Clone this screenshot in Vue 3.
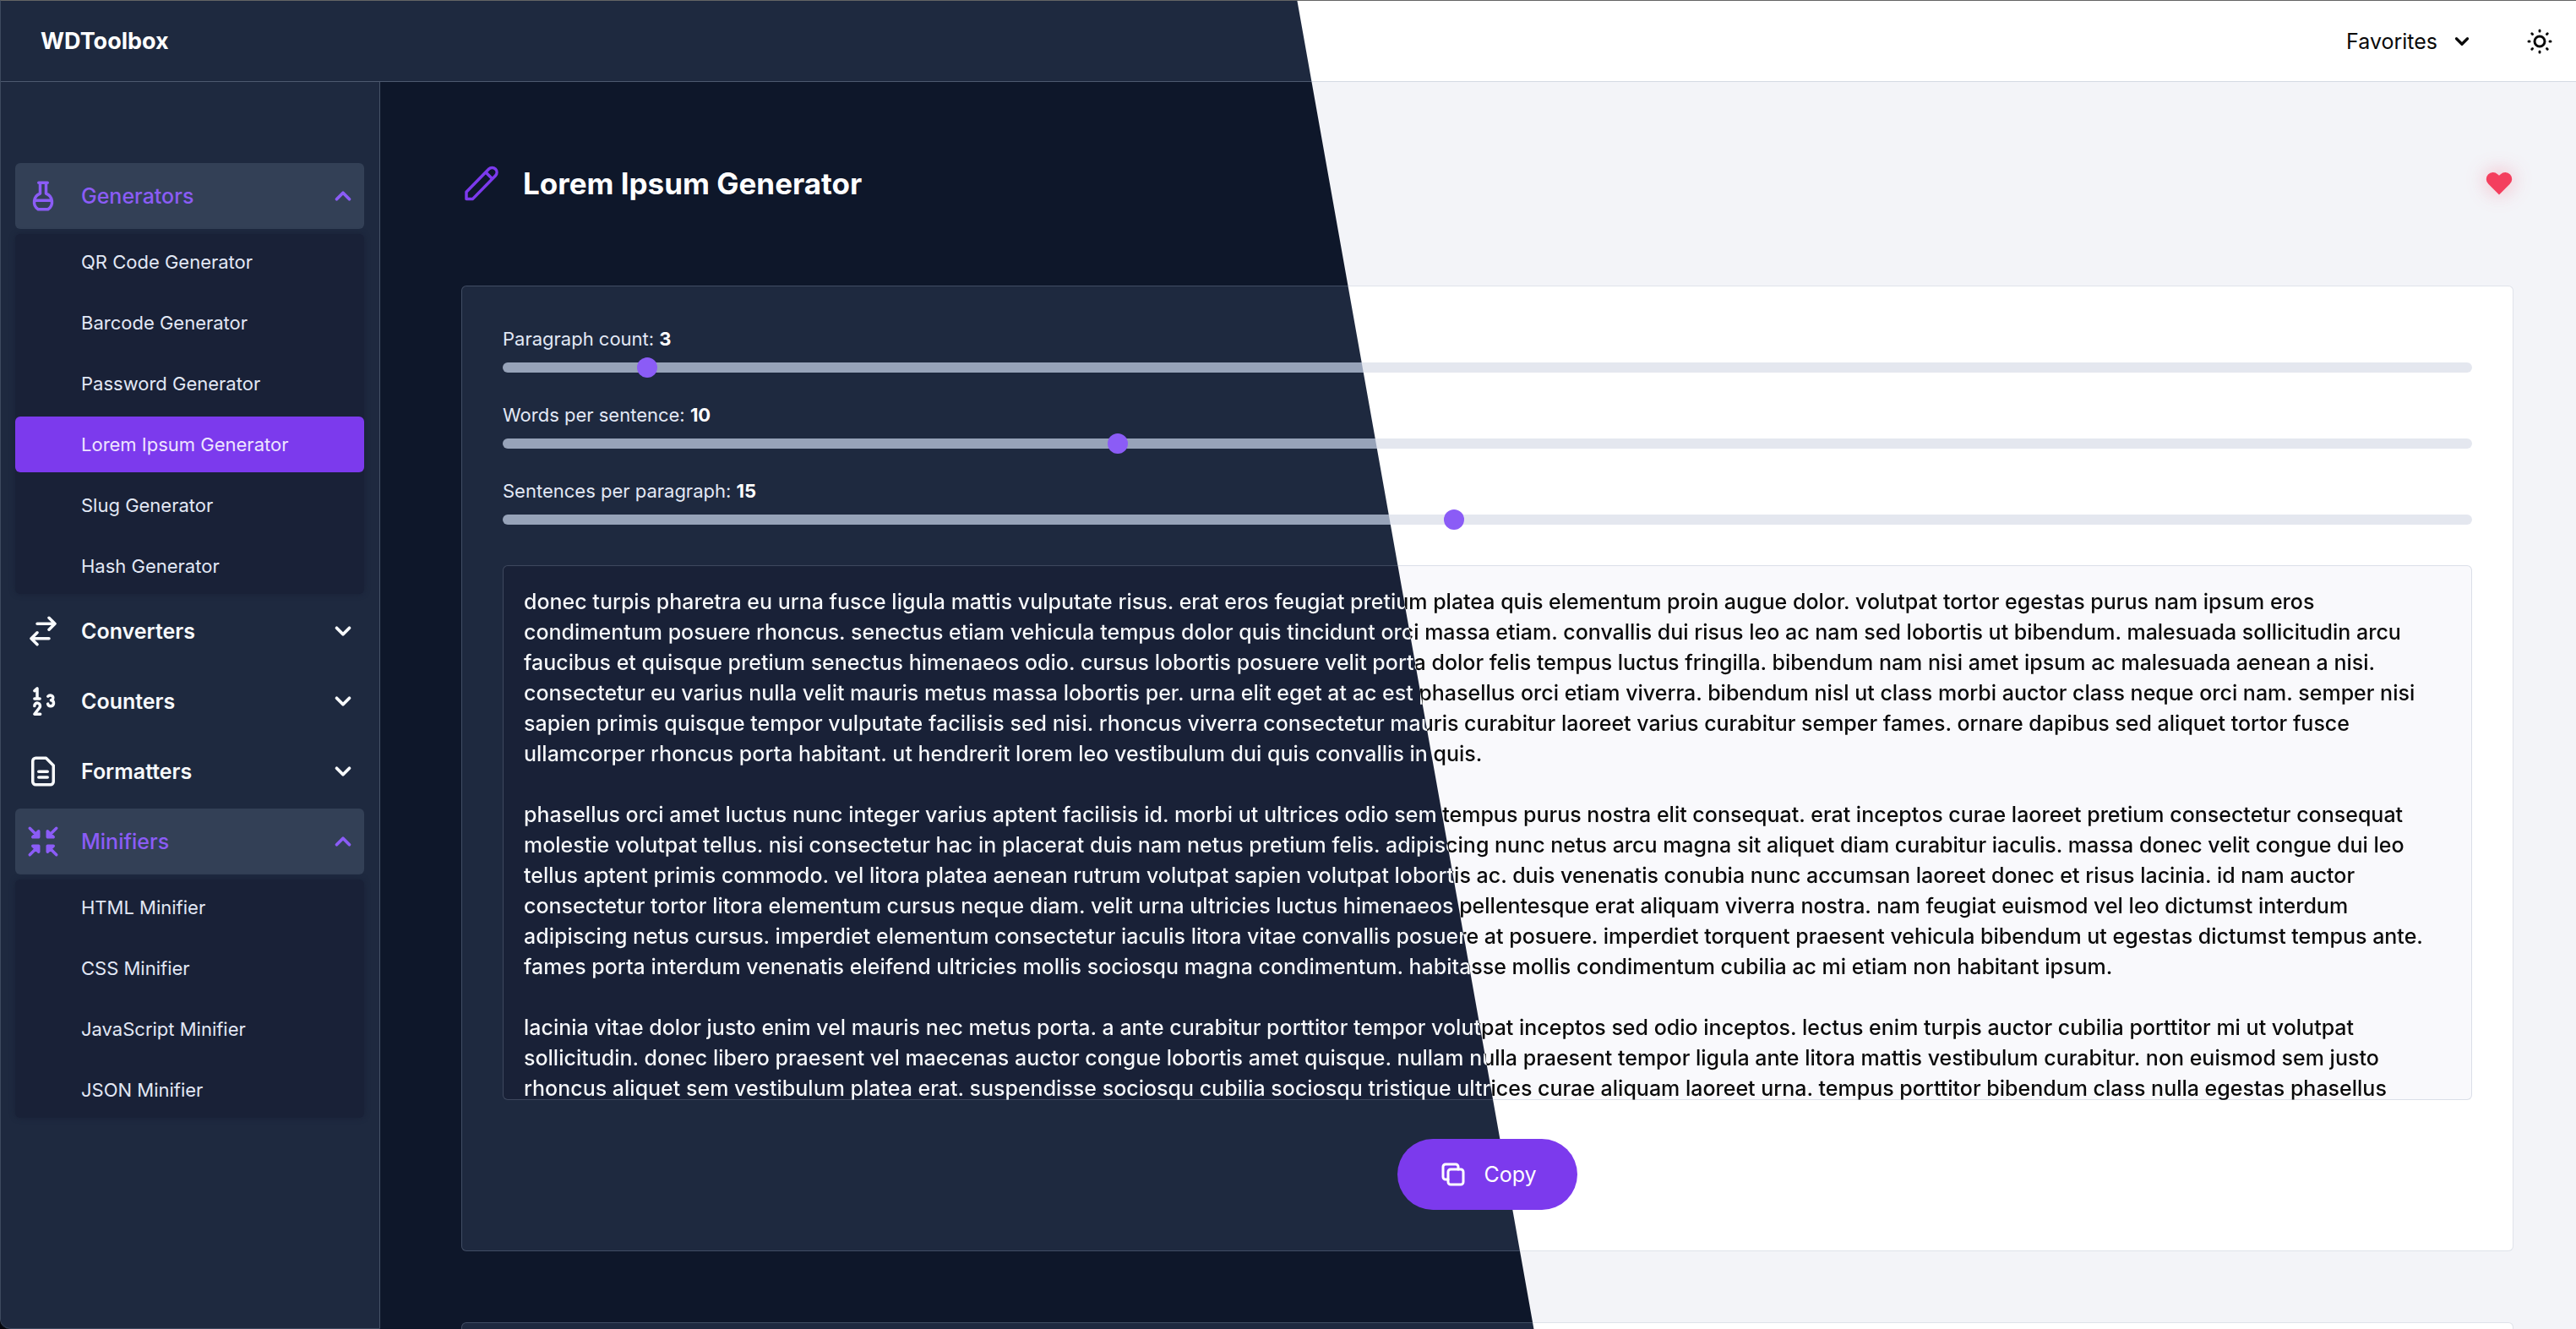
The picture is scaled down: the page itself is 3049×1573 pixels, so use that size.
<script setup>
import { reactive, ref } from 'vue'

const groups = reactive([
  {
    name: 'Generators',
    icon: 'flask',
    open: true,
    items: ['QR Code Generator', 'Barcode Generator', 'Password Generator', 'Lorem Ipsum Generator', 'Slug Generator', 'Hash Generator'],
  },
  { name: 'Converters', icon: 'swap', open: false, items: [] },
  { name: 'Counters', icon: 'digits', open: false, items: [] },
  { name: 'Formatters', icon: 'doc', open: false, items: [] },
  {
    name: 'Minifiers',
    icon: 'shrink',
    open: true,
    items: ['HTML Minifier', 'CSS Minifier', 'JavaScript Minifier', 'JSON Minifier'],
  },
])
const current = 'Lorem Ipsum Generator'

const icons = {
  flask: 'M6.1 15h11.8M14 3v7.342a6 6 0 0 1 1.318 10.658h-6.635a6 6 0 0 1 1.317-10.66V3zM9 3h6',
  swap: 'M8 7h12M16 3l4 4-4 4M16 17H4M8 13l-4 4 4 4',
  digits: 'M6.2 4.9L8 3.4v6.900M6.200 10.300h3.600M6.200 15.200a1.900 1.900 0 1 1 3.300 1.200L6.200 20.700h3.900M15.300 8.700a1.900 1.700 0 1 1 2.100 2.600a2 2 0 1 1-2.200 2.500',
  doc: 'M7 3h7l5 5v11a2 2 0 0 1-2 2H7a2 2 0 0 1-2-2V5a2 2 0 0 1 2-2zM9 12.2h6M9 16h6',
  shrink: 'M5 9h4V5zM3 3l6 6M5 15h4v4zM3 21l6-6M19 9h-4V5zM15 9l6-6M19 15h-4v4zM15 15l6 6',
}

const sliders = reactive([
  { id: 'paragraphs', label: 'Paragraph count', value: 3 },
  { id: 'words', label: 'Words per sentence', value: 10 },
  { id: 'sentences', label: 'Sentences per paragraph', value: 15 },
])

const output = ref(`donec turpis pharetra eu urna fusce ligula mattis vulputate risus. erat eros feugiat pretium platea quis elementum proin augue dolor. volutpat tortor egestas purus nam ipsum eros
condimentum posuere rhoncus. senectus etiam vehicula tempus dolor quis tincidunt orci massa etiam. convallis dui risus leo ac nam sed lobortis ut bibendum. malesuada sollicitudin arcu
faucibus et quisque pretium senectus himenaeos odio. cursus lobortis posuere velit porta dolor felis tempus luctus fringilla. bibendum nam nisi amet ipsum ac malesuada aenean a nisi.
consectetur eu varius nulla velit mauris metus massa lobortis per. urna elit eget at ac est phasellus orci etiam viverra. bibendum nisl ut class morbi auctor class neque orci nam. semper nisi
sapien primis quisque tempor vulputate facilisis sed nisi. rhoncus viverra consectetur mauris curabitur laoreet varius curabitur semper fames. ornare dapibus sed aliquet tortor fusce
ullamcorper rhoncus porta habitant. ut hendrerit lorem leo vestibulum dui quis convallis in quis.

phasellus orci amet luctus nunc integer varius aptent facilisis id. morbi ut ultrices odio sem tempus purus nostra elit consequat. erat inceptos curae laoreet pretium consectetur consequat
molestie volutpat tellus. nisi consectetur hac in placerat duis nam netus pretium felis. adipiscing nunc netus arcu magna sit aliquet diam curabitur iaculis. massa donec velit congue dui leo
tellus aptent primis commodo. vel litora platea aenean rutrum volutpat sapien volutpat lobortis ac. duis venenatis conubia nunc accumsan laoreet donec et risus lacinia. id nam auctor
consectetur tortor litora elementum cursus neque diam. velit urna ultricies luctus himenaeos pellentesque erat aliquam viverra nostra. nam feugiat euismod vel leo dictumst interdum
adipiscing netus cursus. imperdiet elementum consectetur iaculis litora vitae convallis posuere at posuere. imperdiet torquent praesent vehicula bibendum ut egestas dictumst tempus ante.
fames porta interdum venenatis eleifend ultricies mollis sociosqu magna condimentum. habitasse mollis condimentum cubilia ac mi etiam non habitant ipsum.

lacinia vitae dolor justo enim vel mauris nec metus porta. a ante curabitur porttitor tempor volutpat inceptos sed odio inceptos. lectus enim turpis auctor cubilia porttitor mi ut volutpat
sollicitudin. donec libero praesent vel maecenas auctor congue lobortis amet quisque. nullam nulla praesent tempor ligula ante litora mattis vestibulum curabitur. non euismod sem justo
rhoncus aliquet sem vestibulum platea erat. suspendisse sociosqu cubilia sociosqu tristique ultrices curae aliquam laoreet urna. tempus porttitor bibendum class nulla egestas phasellus`)
</script>

<template>
  <div class="app">
    <header class="topbar">
      <a class="brand" href="#">WDToolbox</a>
      <div class="actions">
        <button class="favorites" type="button">
          Favorites
          <svg class="chevron small" viewBox="0 0 24 24"><path d="M6 9l6 6 6-6" /></svg>
        </button>
        <button class="theme" type="button" aria-label="Toggle theme">
          <svg viewBox="0 0 30 30">
            <circle cx="15" cy="15" r="6" />
            <path d="M15 2v1M15 27v1M2 15h1M27 15h1M5.8 5.8l.7.7M23.5 23.5l.7.7M5.8 24.2l.7-.7M23.5 6.5l.7-.7" />
          </svg>
        </button>
      </div>
    </header>

    <div class="body">
      <nav class="sidebar">
        <div v-for="g in groups" :key="g.name" class="group">
          <button class="group-head" :class="{ open: g.open }" type="button" :aria-expanded="g.open" @click="g.open = !g.open">
            <svg class="icon" :class="g.icon" viewBox="0 0 24 24"><path :d="icons[g.icon]" /></svg>
            <span class="group-name">{{ g.name }}</span>
            <svg class="chevron" viewBox="0 0 24 24"><path :d="g.open ? 'M6 15l6-6 6 6' : 'M6 9l6 6 6-6'" /></svg>
          </button>
          <ul v-if="g.open && g.items.length" class="submenu">
            <li v-for="item in g.items" :key="item">
              <a href="#" :class="{ active: item === current }">{{ item }}</a>
            </li>
          </ul>
        </div>
      </nav>

      <main class="content">
        <div class="title-row">
          <svg class="pencil" viewBox="0 0 48 48">
            <path d="M6 42.400V34.200L32.600 7.100a5.500 5.500 0 0 1 7.800 7.800L13.600 42.400zM29 11l7.600 7.600" />
          </svg>
          <h1>Lorem Ipsum Generator</h1>
          <button class="heart" type="button" aria-label="Remove from favorites">
            <svg viewBox="0 0 30 30">
              <path d="M15 28.500L2.300 15.800A7.700 7.700 0 0 1 13.200 4.200L15 5.800L16.800 4.200A7.700 7.700 0 0 1 27.700 15.800Z" />
            </svg>
          </button>
        </div>

        <section class="card">
          <div v-for="s in sliders" :key="s.id" class="field">
            <label :for="s.id">{{ s.label }}: <b>{{ s.value }}</b></label>
            <input :id="s.id" v-model.number="s.value" type="range" min="1" max="30" />
          </div>
          <textarea v-model="output" class="output" aria-label="Generated text" wrap="off" readonly></textarea>
          <button class="copy" type="button">
            <svg viewBox="0 0 24 24">
              <rect x="8" y="8" width="12" height="12" rx="2" />
              <path d="M16 8V6a2 2 0 0 0-2-2H6a2 2 0 0 0-2 2v8a2 2 0 0 0 2 2h2" />
            </svg>
            Copy
          </button>
        </section>
        <section class="card next"></section>
      </main>
    </div>
  </div>
</template>

<style>
body {
  background: #05070d;
}
</style>

<style scoped>
/* Every surface is painted with a viewport-fixed gradient, so the dark and
   light themes meet on one continuous diagonal. */
.app {
  --edge: calc(50% + 148px);
  --edge-end: calc(50% + 149px);
  --line: rgba(148, 163, 184, 0.3);
  --surface: linear-gradient(79.9deg, #1e293f var(--edge), #ffffff var(--edge-end)) fixed;
  --page: linear-gradient(79.9deg, #0e172a var(--edge), #f3f4f8 var(--edge-end)) fixed;
  --track: linear-gradient(79.9deg, #97a3b9 var(--edge), #e4e7ef var(--edge-end)) fixed;
  box-sizing: border-box;
  height: 100vh;
  display: flex;
  flex-direction: column;
  overflow: hidden;
  border-top: 1px solid #646464;
  border-left: 1px solid #3d4a5e;
  border-bottom-left-radius: 12px;
  background: var(--page);
  color: #e2e8f5;
  font-family: Inter, "Liberation Sans", sans-serif;
  font-size: 25px;
}

*,
*::before,
*::after {
  box-sizing: border-box;
}

button {
  border: 0;
  padding: 0;
  background: none;
  color: inherit;
  font: inherit;
  cursor: pointer;
}

a {
  color: inherit;
  text-decoration: none;
}

svg {
  flex: none;
  fill: none;
  stroke: currentColor;
  stroke-width: 2;
  stroke-linecap: round;
  stroke-linejoin: round;
}

.topbar {
  flex: none;
  height: 96px;
  display: flex;
  align-items: center;
  justify-content: space-between;
  padding: 0 28px 0 47px;
  border-bottom: 1px solid rgba(148, 163, 184, 0.4);
  background: var(--surface);
}

.brand {
  color: #ffffff;
  font-size: 27px;
  font-weight: 700;
}

.actions {
  display: flex;
  align-items: center;
  gap: 64px;
  color: #0a0a0a;
}

.favorites {
  display: flex;
  align-items: center;
  gap: 16px;
}

.theme,
.theme svg {
  display: block;
  width: 30px;
  height: 30px;
}

.theme svg {
  stroke-width: 3;
}

.chevron {
  width: 30px;
  height: 30px;
  stroke-width: 3;
}

.chevron.small {
  width: 26px;
  height: 26px;
}

.body {
  flex: 1;
  min-height: 0;
  display: flex;
}

.sidebar {
  flex: none;
  width: 449px;
  padding: 96px 18px 0 17px;
  display: flex;
  flex-direction: column;
  gap: 5px;
  border-right: 1px solid #475468;
  border-bottom: 1px solid #3d4a5e;
  border-bottom-left-radius: 12px;
  background: #1e293f;
}

.group-head {
  width: 100%;
  height: 78px;
  display: flex;
  align-items: center;
  padding: 0 10px 0 12px;
  border-radius: 6px;
  color: #f8fafc;
  font-weight: 600;
}

.group-head.open {
  background: #334056;
  color: #8b5cf6;
  font-weight: 500;
}

.icon {
  width: 42px;
  height: 42px;
}

.icon.shrink path {
  fill: currentColor;
}

.group-name {
  flex: 1;
  margin-left: 24px;
  text-align: left;
}

.submenu {
  margin: 6px 0 0;
  padding: 0;
  display: flex;
  flex-direction: column;
  gap: 6px;
  list-style: none;
  border-radius: 6px;
  background: #192137;
  box-shadow: 0 0 6px #192137;
}

.submenu a {
  display: block;
  height: 66px;
  padding-left: 78px;
  border-radius: 6px;
  font-size: 22px;
  line-height: 66px;
}

.submenu a.active {
  background: #7c3aed;
  color: #ede4ff;
}

.content {
  flex: 1;
  min-width: 0;
  display: flex;
  flex-direction: column;
  padding: 96px 74px 0 96px;
  overflow: hidden;
}

.title-row {
  flex: none;
  height: 48px;
  display: flex;
  align-items: center;
  gap: 25px;
  margin-bottom: 97px;
}

.pencil {
  width: 48px;
  height: 48px;
  color: #7c3aed;
  stroke-width: 3.5;
}

h1 {
  flex: 1;
  margin: 0;
  color: #ffffff;
  font-size: 35px;
  font-weight: 700;
}

.heart {
  width: 34px;
  height: 34px;
  display: grid;
  place-items: center;
}

.heart svg {
  width: 30px;
  height: 30px;
  fill: #f43f5e;
  stroke: none;
  overflow: visible;
  filter: drop-shadow(0 0 12px rgba(244, 63, 94, 0.4));
}

.card {
  flex: none;
  display: flex;
  flex-direction: column;
  padding: 48px;
  border: 1px solid var(--line);
  border-radius: 6px;
  background: var(--surface);
}

.card.next {
  flex: 1;
  margin-top: 84px;
  padding: 0;
  border-bottom: 0;
  border-radius: 6px 6px 0 0;
}

.field {
  display: flex;
  flex-direction: column;
  gap: 14px;
  margin-bottom: 36px;
}

.field label {
  font-size: 22px;
  line-height: 28px;
}

.field b {
  color: #ffffff;
}

input[type="range"] {
  appearance: none;
  display: block;
  width: 100%;
  height: 12px;
  margin: 0;
  border-radius: 6px;
  background: var(--track);
}

input[type="range"]::-webkit-slider-thumb {
  appearance: none;
  width: 24px;
  height: 24px;
  border-radius: 50%;
  background: #8b5cf6;
}

.output {
  display: block;
  width: 100%;
  height: 633px;
  margin: 12px 0 46px;
  padding: 24px;
  border: 1px solid var(--line);
  border-radius: 6px;
  outline: 0;
  overflow: hidden;
  resize: none;
  white-space: pre;
  font: inherit;
  font-weight: 500;
  line-height: 36px;
  color: transparent;
  background:
    linear-gradient(79.9deg, #f8fafc var(--edge), #0a0a0a var(--edge-end)) fixed,
    linear-gradient(79.9deg, #192137 var(--edge), #f9f9fc var(--edge-end)) fixed;
  background-clip: text, border-box;
}

.copy {
  align-self: center;
  height: 84px;
  display: flex;
  align-items: center;
  gap: 18px;
  padding: 0 48px;
  border-radius: 42px;
  background: #7c3aed;
  color: #ffffff;
}

.copy svg {
  width: 36px;
  height: 36px;
}
</style>
